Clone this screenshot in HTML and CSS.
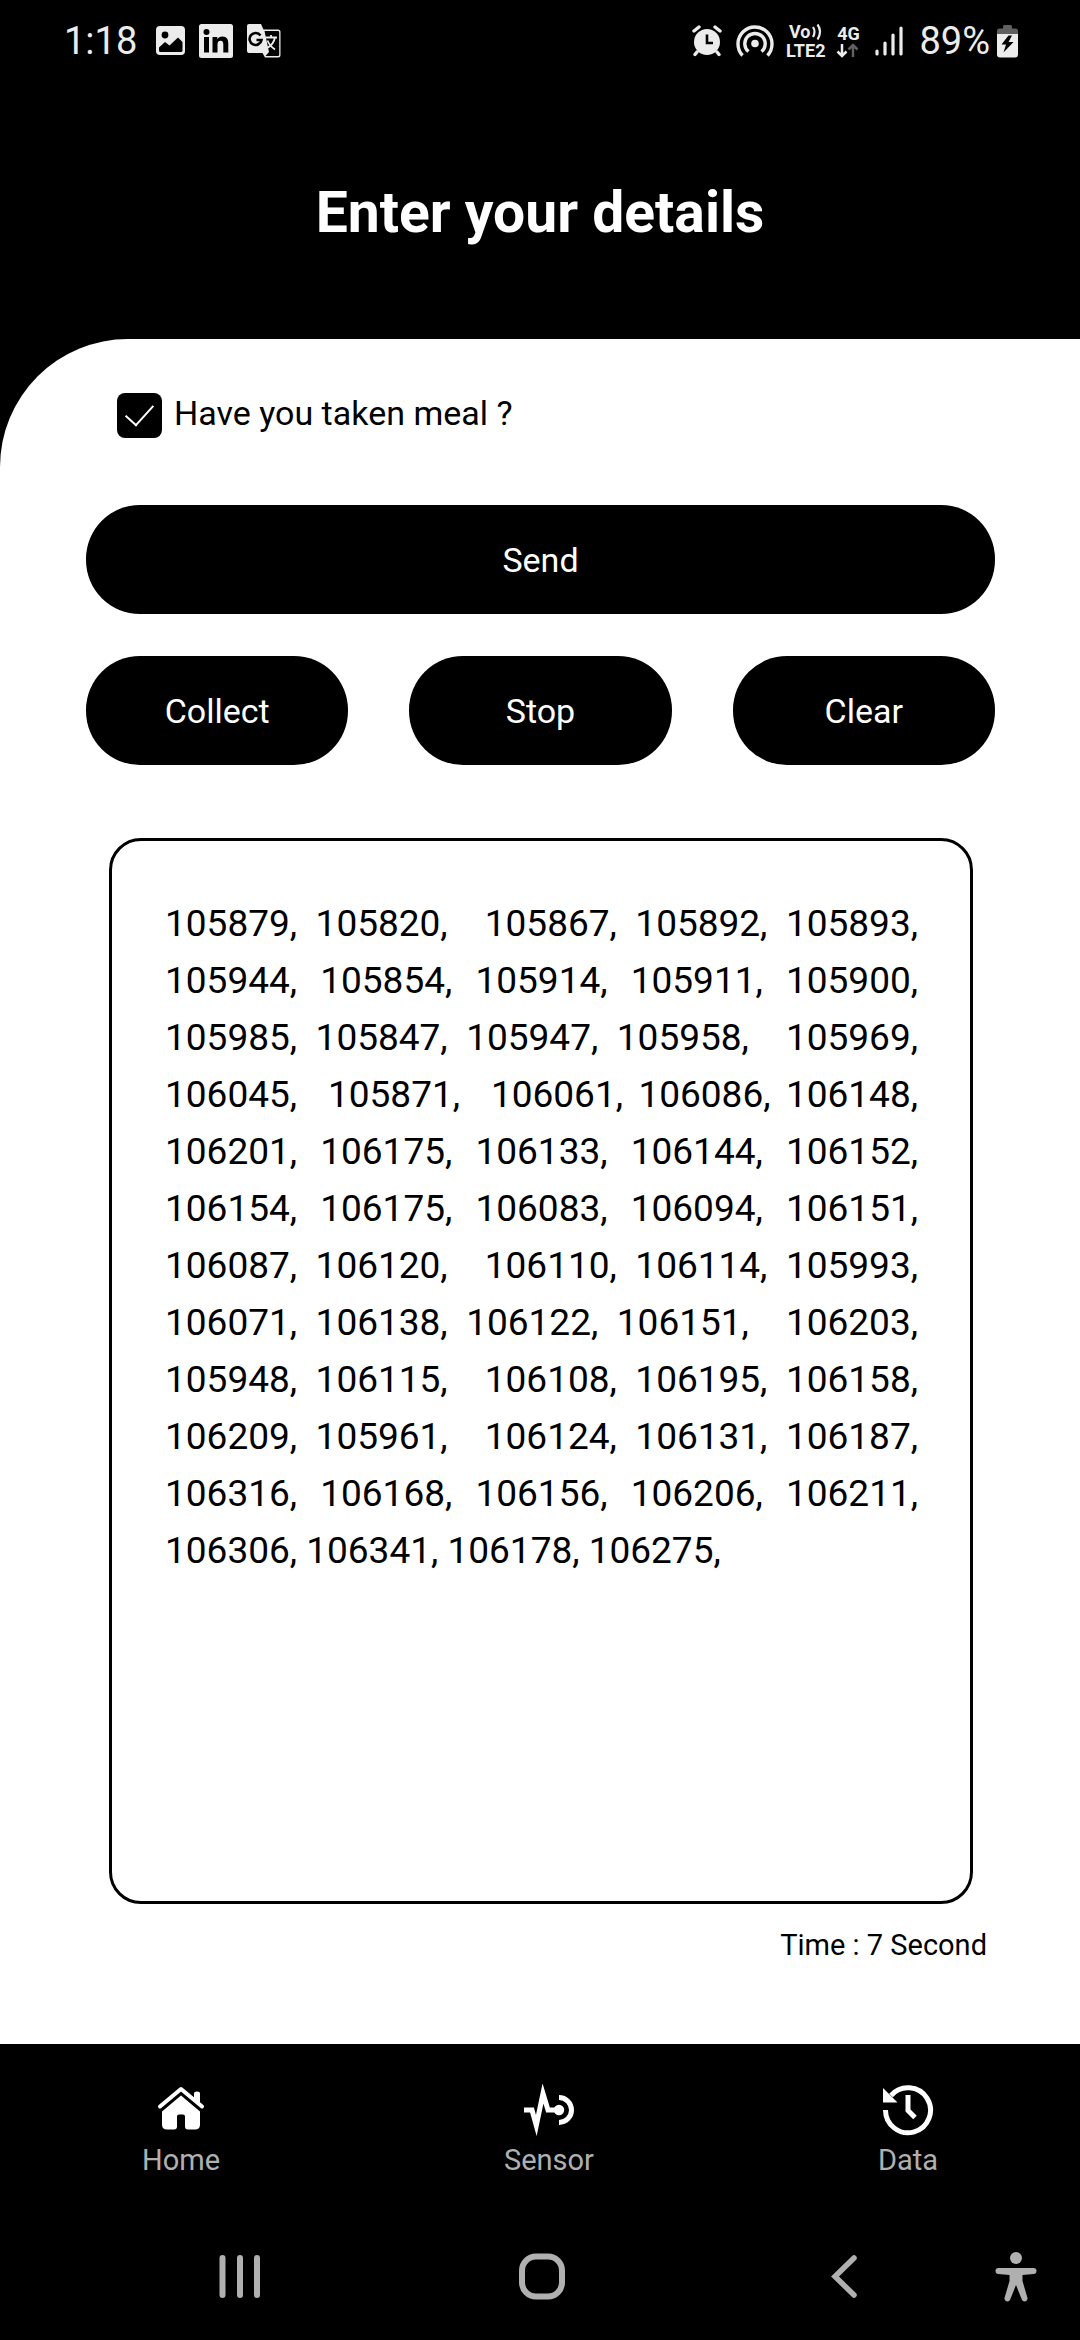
FILE: index.html
```html
<!DOCTYPE html>
<html lang="en">
<head>
<meta charset="utf-8">
<meta name="viewport" content="width=device-width, initial-scale=1">
<title>Enter your details</title>
<link rel="stylesheet" href="styles.css">
</head>
<body>
<div class="screen">
  <div class="status">
    <div class="status-left">
      <span class="status-text">1:18</span>
      <svg class="ic-image" width="30" height="30" viewBox="0 0 30 30" aria-hidden="true"><rect x="0" y="0" width="29" height="29" rx="4" fill="#ececec"/><circle cx="9" cy="9" r="3.4" fill="#000"/><path d="M3 21.500l6-5.500 4.500 3.500 8.500-8 4.500 4.500v8.500q0 1.500-1.500 1.500h-20.500q-1.500 0-1.500-1.500z" fill="#000"/></svg>
      <svg class="ic-linkedin" width="36" height="36" viewBox="0 0 36 36" aria-hidden="true"><rect x="1" y="1" width="34" height="34" rx="2.500" fill="#ececec"/><circle cx="8.500" cy="9" r="3" fill="#000"/><path d="M6 14h5v15.500h-5zM14.500 14h4.800v2.200c1-1.700 2.900-2.600 5-2.600 4.600 0 6 2.800 6 7.400v8.500h-5v-7.700c0-2.400-.5-4-2.700-4-2.300 0-3.100 1.600-3.100 4v7.700h-5z" fill="#000"/></svg>
      <svg width="36" height="36" viewBox="0 0 36 36" aria-hidden="true"><path d="M3 1h12l2.500 5.500h14.500q2.500 0 2.500 2.500v23q0 2.500-2.500 2.500h-13l-2.500-4.500h-13.500q-2 0-2-2v-25q0-2 2-2z" fill="#ececec"/><path d="M18.500 8h13.500q1.200 0 1.200 1.200v22.600q0 1.200-1.200 1.200h-12.500l3.500-4z" fill="#000"/><path d="M14.500 12.500a6 6 0 1 0 1 4.500h-5" fill="none" stroke="#000" stroke-width="2.600"/><path d="M19.500 14.500h11.500M25 12v2.500M29 14.500c-1 5-4 8.500-8 10.500M21.500 17.500c1.500 4 4.500 7 7.500 9" fill="none" stroke="#ececec" stroke-width="1.800"/></svg>
    </div>
    <div class="status-right">
      <svg class="ic-alarm" width="30" height="32" viewBox="0 0 30 32" aria-hidden="true"><circle cx="15" cy="17" r="13" fill="#ececec"/><path d="M2 6l5-4M28 6l-5-4M5 27l-2 2.500M25 27l2 2.500" stroke="#ececec" stroke-width="3.400" stroke-linecap="round"/><path d="M15 9.500v8.500h6" fill="none" stroke="#000" stroke-width="2.600"/></svg>
      <svg class="ic-hotspot" width="38" height="34" viewBox="0 0 38 34" aria-hidden="true"><circle cx="19" cy="19.500" r="3.800" fill="#ececec"/><path d="M6.500 31.500a17 17 0 1 1 25 0M12.500 27.500a10.200 10.200 0 1 1 13 0" fill="none" stroke="#ececec" stroke-width="3.400"/></svg>
      <span class="volte"><span class="volte-top">Vo<svg width="12" height="18" viewBox="0 0 12 18" aria-hidden="true"><path d="M2 4q3 4.500 0 10M6.500 1.500q5 7 0 15" fill="none" stroke="#ececec" stroke-width="2.200"/></svg></span><span>LTE2</span></span>
      <span class="network"><span>4G</span><svg width="24" height="15" viewBox="0 0 24 15" aria-hidden="true"><path d="M6 1v11.500M1.500 8.500l4.500 4.500 4.500-4.500" fill="none" stroke="#ececec" stroke-width="2.500"/><path d="M17 14v-11.500M12.500 6.500l4.500-4.500 4.500 4.500" fill="none" stroke="#606060" stroke-width="2.500"/></svg></span>
      <svg class="ic-signal" width="28" height="30" viewBox="0 0 28 30" aria-hidden="true"><path d="M2 25v3M10 17v11M18 9v19M26 2v26" stroke="#ececec" stroke-width="3.200" stroke-linecap="round"/></svg>
      <span class="status-text">89%</span>
      <svg class="ic-battery" width="21" height="34" viewBox="0 0 21 34" aria-hidden="true"><path d="M0 10v-3q0-2.500 2.500-2.500h3.500v-2q0-1.500 1.500-1.500h6q1.500 0 1.500 1.500v2h3.500q2.500 0 2.500 2.500v3z" fill="#606060"/><path d="M0 10h21v20.500q0 3-3 3h-15q-3 0-3-3z" fill="#ececec"/><path d="M11.500 11.500l-7 9h4.500l-2.500 8 10-10.500h-5l3.500-6.500z" fill="#000"/></svg>
    </div>
  </div>

  <header class="header"><h1 class="title">Enter your details</h1></header>

  <main class="sheet">
    <label class="meal"><input class="meal-box" type="checkbox" checked><span>Have you taken meal ?</span></label>
    <button class="btn btn-send" type="button">Send</button>
    <div class="actions">
      <button class="btn" type="button">Collect</button>
      <button class="btn" type="button">Stop</button>
      <button class="btn" type="button">Clear</button>
    </div>
    <p class="readings">105879, 105820,  105867, 105892, 105893, 105944, 105854, 105914, 105911, 105900, 105985, 105847, 105947, 105958,  105969, 106045,  105871,  106061, 106086, 106148, 106201, 106175, 106133, 106144, 106152, 106154, 106175, 106083, 106094, 106151, 106087, 106120,  106110, 106114, 105993, 106071, 106138, 106122, 106151,  106203, 105948, 106115,  106108, 106195, 106158, 106209, 105961,  106124, 106131, 106187, 106316, 106168, 106156, 106206, 106211, 106306, 106341, 106178, 106275,</p>
    <p class="time">Time : 7 Second</p>
  </main>

  <nav class="tabs">
    <a class="tab" href="#home"><svg width="52" height="52" viewBox="0 0 52 52" aria-hidden="true"><path d="M5 22.500L26 5 47 22.500" fill="none" stroke="#fff" stroke-width="4" stroke-linecap="round" stroke-linejoin="round"/><path d="M39 14.500V9.500q0-2 3-2t3 2v11z" fill="#fff"/><path d="M26 11.500l19 16v13q0 5-5 5h-7q-3 0-3-3v-10q0-2-2-2h-4q-2 0-2 2v10q0 3-3 3h-7q-5 0-5-5v-13z" fill="#fff"/></svg>Home</a>
    <a class="tab" href="#sensor"><svg width="52" height="52" viewBox="0 0 52 52" aria-hidden="true"><path d="M1 26h8l4.300 15.500 6.700-32 5 16.500h10" fill="none" stroke="#fff" stroke-width="5" stroke-miterlimit="10"/><circle cx="36" cy="26" r="5.200" fill="#fff"/><path d="M36 13.500a12.500 12.500 0 0 1 0 25" fill="none" stroke="#fff" stroke-width="5"/></svg>Sensor</a>
    <a class="tab" href="#data"><svg width="52" height="52" viewBox="0 0 52 52" aria-hidden="true"><path d="M3.500 26a22.500 22.500 0 1 0 5.500-14.500" fill="none" stroke="#fff" stroke-width="5"/><path d="M1 4l14.500 14.500h-14.500z" fill="#fff"/><path d="M26 11v15.500l7 7" fill="none" stroke="#fff" stroke-width="5"/></svg>Data</a>
  </nav>

  <div class="system">
    <button class="sys" type="button" aria-label="Recent apps"><svg width="48" height="52" viewBox="0 0 48 52"><path d="M6.500 7v37M24 7v37M41 7v37" stroke="#b0b0b0" stroke-width="6" stroke-linecap="round"/></svg></button>
    <button class="sys" type="button" aria-label="Home screen"><svg width="48" height="52" viewBox="0 0 48 52"><rect x="4" y="5.500" width="40" height="40" rx="14" fill="none" stroke="#b0b0b0" stroke-width="6"/></svg></button>
    <button class="sys" type="button" aria-label="Back"><svg width="48" height="52" viewBox="0 0 48 52"><path d="M34 7l-19 18.500 19 18.500" fill="none" stroke="#b0b0b0" stroke-width="5.500" stroke-linecap="round"/></svg></button>
    <button class="sys" type="button" aria-label="Accessibility"><svg width="42" height="52" viewBox="3 0 42 52"><circle cx="24" cy="7" r="6" fill="#b0b0b0"/><path d="M6.500 17h35a3 3 0 0 1 0 6l-11 1v6l5 17a3 3 0 0 1-5.500 2l-6-15-6 15a3 3 0 0 1-5.500-2l5-17v-6l-11-1a3 3 0 0 1 0-6z" fill="#b0b0b0"/></svg></button>
  </div>
</div>
</body>
</html>
```

FILE: styles.css
```css
* { box-sizing: border-box; }
body { margin: 0; background: #000; font-family: Roboto, "Liberation Sans", sans-serif; }
h1, p { margin: 0; }
button { border: 0; font: inherit; cursor: pointer; }

.screen { display: flex; flex-direction: column; min-height: 100vh; }

.status { display: flex; justify-content: space-between; height: 82px; padding: 0 62px 0 64px; color: #ececec; }
.status-left, .status-right { display: flex; align-items: center; }
.status-left { gap: 12px; }
.status-text { font-size: 38px; line-height: 48px; }
.ic-image { margin-left: 7px; }
.ic-hotspot { margin-left: 14px; }
.volte, .network { display: flex; flex-direction: column; font-size: 18px; font-weight: 700; line-height: 19px; }
.volte { margin-left: 12px; }
.volte-top { display: flex; align-items: center; justify-content: center; }
.network { align-items: center; margin-left: 11px; }
.ic-signal { margin-left: 15px; }
.status-right .status-text { margin-left: 16px; }
.ic-battery { margin-left: 7px; }

.header { display: flex; align-items: center; justify-content: center; height: 257px; padding-top: 4px; }
.title { color: #fff; font-size: 57px; font-weight: 700; line-height: 66px; }

.sheet { flex: 1; padding: 54px 85px 0 86px; border-top-left-radius: 128px; background: #fff; color: #000; }
.meal { display: flex; align-items: flex-start; gap: 12px; width: max-content; margin-left: 31px; font-size: 34px; line-height: 40px; }
.meal-box { appearance: none; display: grid; place-items: center; width: 45px; height: 45px; margin: 0; border-radius: 8px; background: #000; }
.meal-box:checked::before { content: ""; width: 13px; height: 25px; margin-bottom: 8px; border: solid #fff; border-width: 0 2px 2px 0; transform: rotate(42deg); }

.btn { height: 109px; border-radius: 54px; background: #000; color: #fff; font-size: 34px; }
.btn-send { display: block; width: 100%; margin-top: 67px; }
.actions { display: grid; grid-template-columns: repeat(3, 1fr); gap: 61px; margin-top: 42px; }

.readings { min-height: 1066px; margin: 73px 22px 0 23px; padding: 54px 52px 54px 53px; border: 3px solid #000; border-radius: 32px; font-size: 37px; line-height: 57px; text-align: justify; white-space: pre-wrap; }
.time { margin-top: 24px; padding-right: 8px; font-size: 29px; line-height: 34px; text-align: right; }

.tabs { display: flex; justify-content: space-around; height: 170px; padding-top: 40px; }
.tab { display: flex; flex-direction: column; align-items: center; gap: 7px; color: #b0b0b0; font-size: 29px; line-height: 34px; text-decoration: none; }

.system { display: grid; grid-template-columns: repeat(3, 1fr) 42px; height: 126px; padding: 0 43px 0 89px; }
.sys { display: flex; align-items: center; justify-content: center; padding: 0; background: none; }
```
